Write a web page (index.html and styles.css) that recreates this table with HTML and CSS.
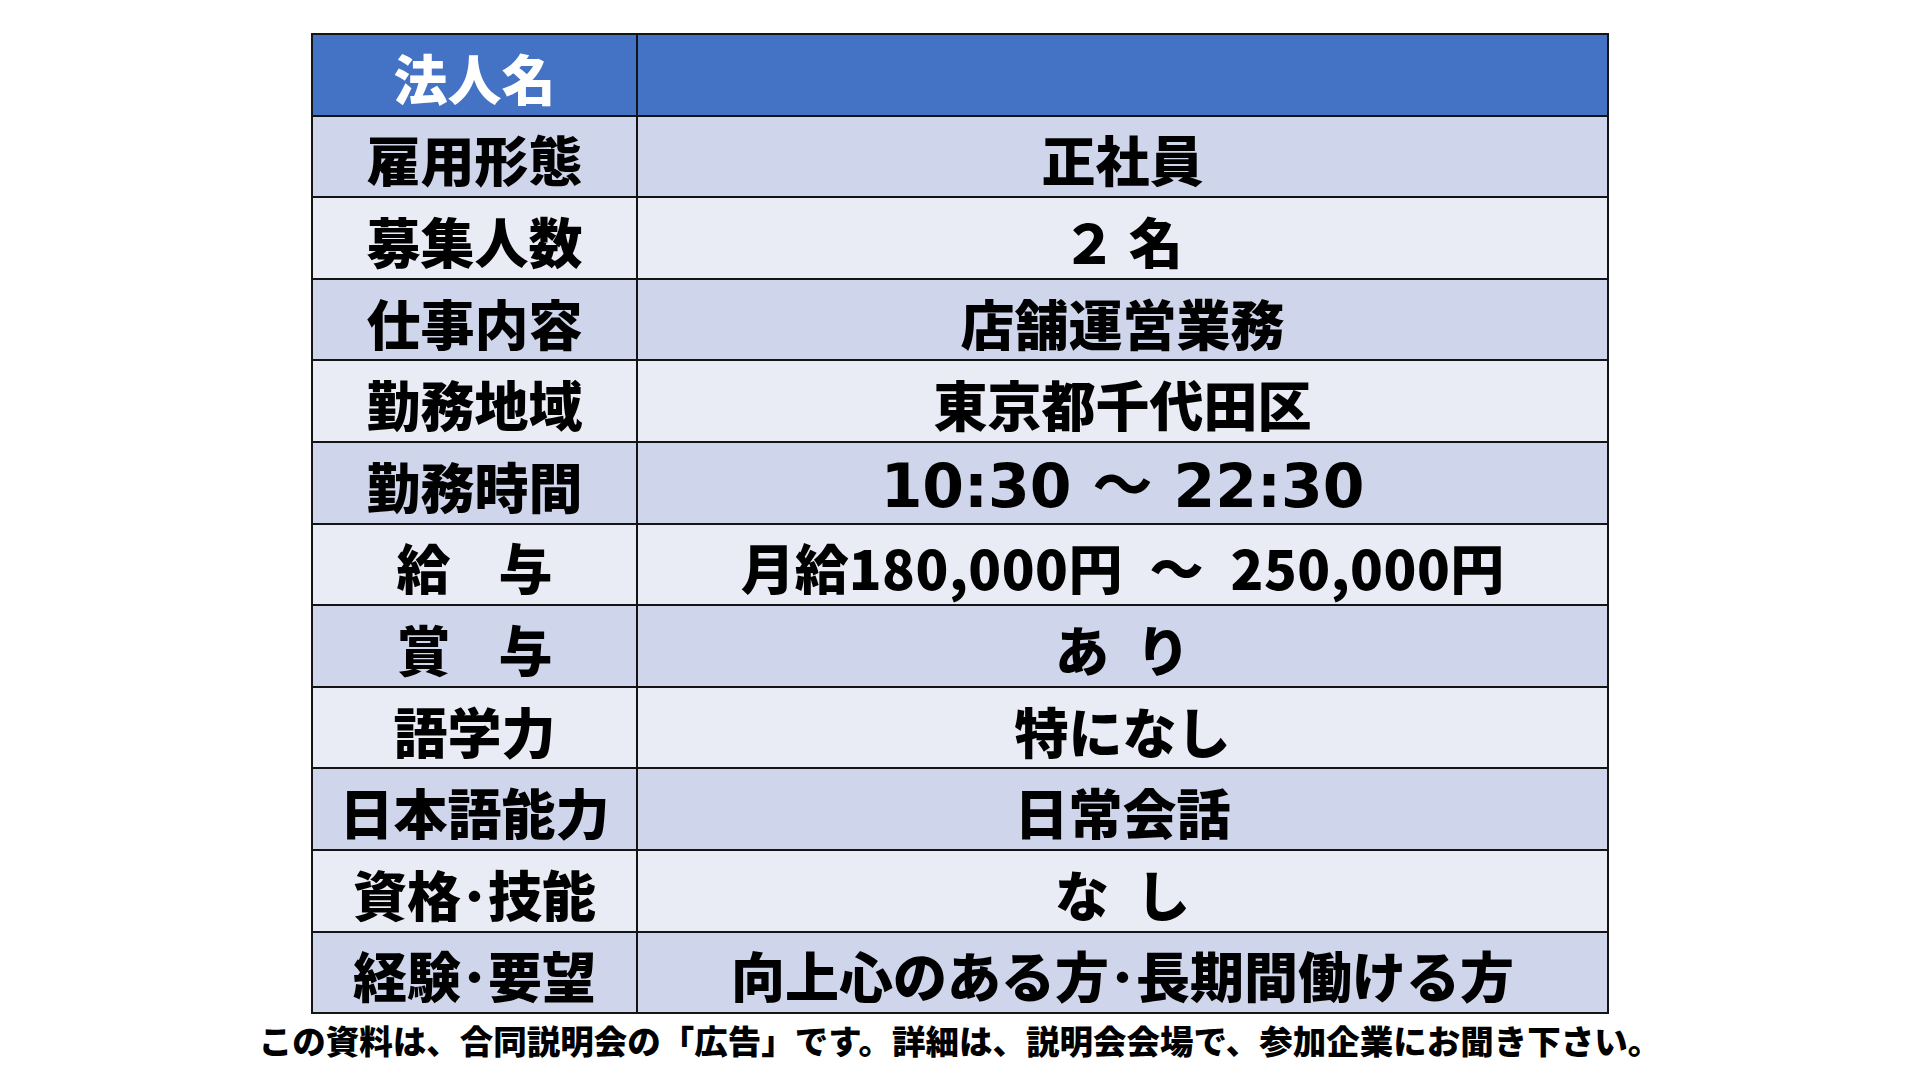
FILE: index.html
```html
<!DOCTYPE html>
<html lang="ja">
<head>
<meta charset="utf-8">
<title>求人情報</title>
<link rel="stylesheet" href="styles.css">
</head>
<body>
<main class="page">
  <table class="jobs">
    <colgroup><col class="c-label"><col class="c-value"></colgroup>
    <tbody>
      <tr class="head"><th>法人名</th><td></td></tr>
      <tr class="odd"><th>雇用形態</th><td>正社員</td></tr>
      <tr class="even"><th>募集人数</th><td>２ 名</td></tr>
      <tr class="odd"><th>仕事内容</th><td>店舗運営業務</td></tr>
      <tr class="even"><th>勤務地域</th><td>東京都千代田区</td></tr>
      <tr class="odd"><th>勤務時間</th><td class="latin">10:30 ～ 22:30</td></tr>
      <tr class="even"><th>給<span class="gap">　</span>与</th><td>月給<span class="num">180,000</span>円&ensp;～&ensp;<span class="num">250,000</span>円</td></tr>
      <tr class="odd"><th>賞<span class="gap">　</span>与</th><td>あ&ensp;り</td></tr>
      <tr class="even"><th>語学力</th><td>特になし</td></tr>
      <tr class="odd"><th>日本語能力</th><td>日常会話</td></tr>
      <tr class="even"><th>資格･技能</th><td>な&ensp;し</td></tr>
      <tr class="odd"><th>経験･要望</th><td>向上心のある方･長期間働ける方</td></tr>
    </tbody>
  </table>
  <p class="note">この資料は、合同説明会の「広告」です。詳細は、説明会会場で、参加企業にお聞き下さい。</p>
</main>
</body>
</html>
```

FILE: styles.css
```css
html, body {
  margin: 0;
  padding: 0;
  background: #ffffff;
}

.page {
  width: 1920px;
  height: 1080px;
  display: flex;
  flex-direction: column;
  align-items: center;
  padding-top: 33px;
  box-sizing: border-box;
  font-family: "Noto Sans CJK JP", "Noto Sans", sans-serif;
  color: #000;
}

.jobs {
  border-collapse: collapse;
  width: 1296px;
  table-layout: fixed;
}

.c-label { width: 325px; }
.c-value { width: 971px; }

.jobs th,
.jobs td {
  border: 2px solid #141414;
  height: 73.6px;
  padding: 6px 0 0 0;
  text-align: center;
  vertical-align: middle;
  font-size: 54px;
  font-weight: 900;
  line-height: 1;
  white-space: nowrap;
}

.head th,
.head td {
  background: #4472c4;
  color: #ffffff;
}

.odd th,
.odd td { background: #cfd5ea; }

.even th,
.even td { background: #e9ebf5; }

.gap {
  letter-spacing: -6px;
}

.num {
  letter-spacing: 0.5px;
}

.jobs td.latin {
  font-family: "DejaVu Sans", "Noto Sans CJK JP", sans-serif;
  font-weight: 700;
  font-size: 60px;
}

.note {
  margin: 9px 0 0 0;
  font-size: 33.5px;
  font-weight: 900;
  line-height: 1;
}
```
